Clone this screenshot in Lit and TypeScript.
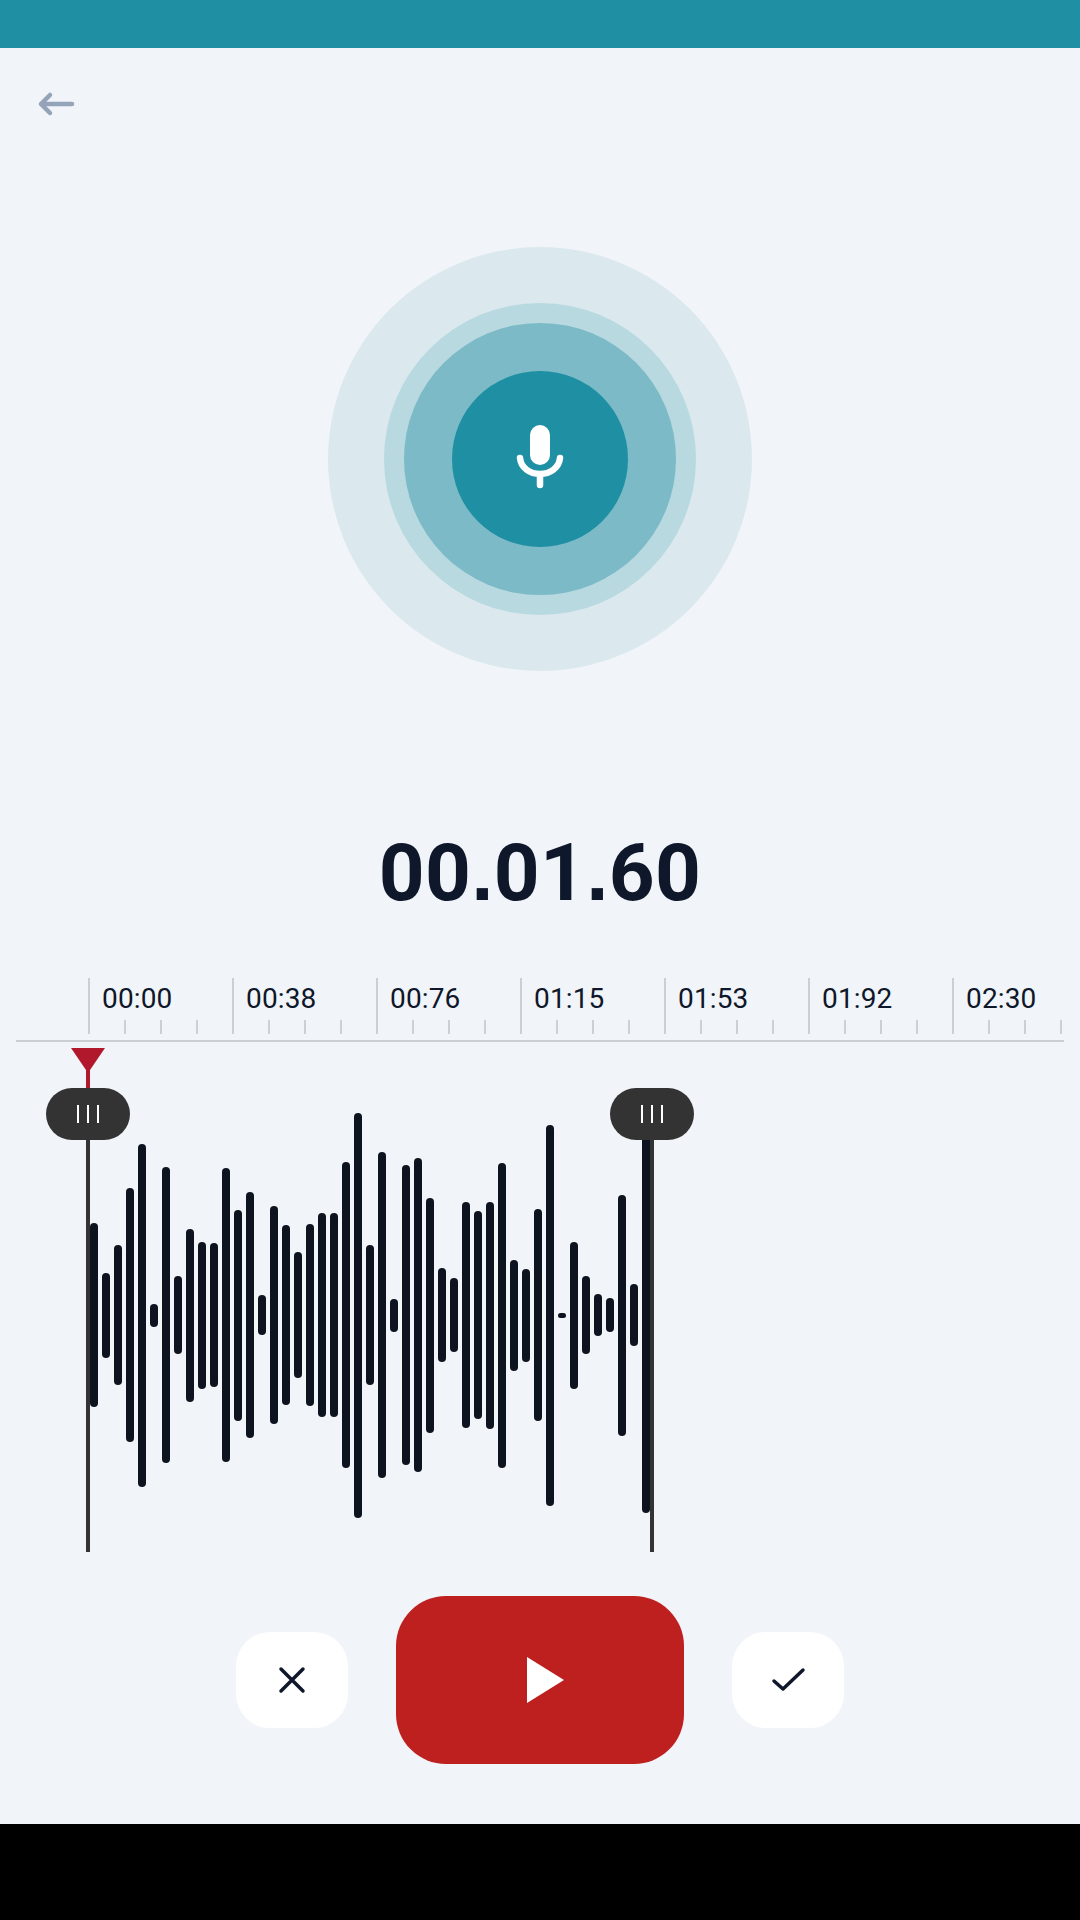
import { LitElement, css, html } from 'lit';
import { customElement } from 'lit/decorators.js';

// bar heights in px, left to right
const BARS = [
  184, 85, 140, 254, 343, 23, 296, 78, 173, 147, 144, 294, 211, 246, 40, 218,
  180, 126, 182, 204, 204, 306, 405, 140, 326, 33, 300, 314, 235, 94, 74, 226,
  208, 227, 305, 111, 93, 212, 381, 5, 147, 78, 42, 34, 241, 62, 395,
];

const LABELS = ['00:00', '00:38', '00:76', '01:15', '01:53', '01:92', '02:30'];

@customElement('app-root')
export class AppRoot extends LitElement {
  static styles = css`
    :host {
      display: flex;
      flex-direction: column;
      height: 1920px;
      background: #f1f5f9;
      color: #0f172a;
      font-family: Roboto, sans-serif;
      overflow: hidden;
    }
    .status {
      height: 48px;
      background: #1f8fa3;
    }
    .header {
      height: 112px;
      box-sizing: border-box;
      padding: 36px 0 0 36px;
    }
    .header svg {
      display: block;
    }
    .rings {
      display: grid;
      place-items: center;
      height: 424px;
      margin-top: 87px;
    }
    .rings > * {
      grid-area: 1 / 1;
      border-radius: 50%;
    }
    .r1 {
      width: 424px;
      height: 424px;
      background: #dbe9ee;
    }
    .r2 {
      width: 312px;
      height: 312px;
      background: #b8d9e0;
    }
    .r3 {
      width: 272px;
      height: 272px;
      background: #7bbac6;
    }
    .r4 {
      width: 176px;
      height: 176px;
      background: #1f8fa3;
      display: flex;
      align-items: center;
      justify-content: center;
    }
    .timer {
      margin-top: 162px;
      font-size: 80px;
      line-height: 80px;
      font-weight: 700;
      letter-spacing: 0.3px;
      text-align: center;
    }
    /* Roboto here has round dots, the reference has square ones */
    .timer b {
      font-family: 'Liberation Sans', sans-serif;
    }
    .ruler {
      display: flex;
      box-sizing: border-box;
      margin: 65px 16px 0;
      padding-left: 72px;
      border-bottom: 2px solid #cbd0d6;
      height: 64px;
      overflow: hidden;
    }
    .seg {
      flex: 0 0 144px;
      box-sizing: border-box;
      height: 56px;
      border-left: 2px solid #cbd0d6;
      display: flex;
      flex-direction: column;
    }
    .seg span {
      margin-top: 7px;
      padding-left: 12px;
      font-size: 28px;
      line-height: 28px;
      letter-spacing: 0.15px;
    }
    .ticks {
      display: flex;
      gap: 34px;
      margin-top: auto;
      padding-left: 34px;
    }
    .ticks i {
      width: 2px;
      height: 14px;
      background: #cbd0d6;
    }
    .wave {
      position: relative;
      height: 504px;
      margin-top: 6px;
      box-sizing: border-box;
      padding: 30px 0 0 90px;
      display: flex;
      align-items: center;
      gap: 4px;
    }
    .bar {
      width: 8px;
      border-radius: 4px;
      background: #0d131f;
    }
    .playhead {
      position: absolute;
      left: 71px;
      top: 0;
      display: block;
    }
    .trim {
      position: absolute;
      top: 40px;
      width: 84px;
      display: flex;
      flex-direction: column;
      align-items: center;
    }
    .trim.start {
      left: 46px;
    }
    .trim.end {
      left: 610px;
    }
    .grip {
      width: 84px;
      height: 52px;
      border-radius: 26px;
      background: #333;
      display: flex;
      align-items: center;
      justify-content: center;
      gap: 8px;
    }
    .grip i {
      width: 2px;
      height: 18px;
      background: #fff;
    }
    .line {
      width: 4px;
      height: 412px;
      background: #333;
    }
    .controls {
      display: flex;
      align-items: center;
      justify-content: center;
      gap: 48px;
      height: 168px;
      margin-top: 44px;
    }
    .btn {
      width: 112px;
      height: 96px;
      border-radius: 34px;
      background: #fff;
      display: flex;
      align-items: center;
      justify-content: center;
    }
    .btn.play {
      width: 288px;
      height: 168px;
      border-radius: 50px;
      background: #be2020;
    }
    .play svg {
      margin-left: 10px;
    }
    .nav {
      flex: 1;
      margin-top: 60px;
      background: #000;
    }
  `;

  private renderTrim(pos: string) {
    return html`
      <div class="trim ${pos}">
        <div class="grip"><i></i><i></i><i></i></div>
        <div class="line"></div>
      </div>
    `;
  }

  render() {
    return html`
      <div class="status"></div>
      <div class="header">
        <svg width="40" height="40" viewBox="0 0 40 40" fill="none" stroke="#94a3b8" stroke-width="4.5" stroke-linecap="round" stroke-linejoin="round">
          <path d="M36 20H5M14 11L5 20L14 29" />
        </svg>
      </div>
      <div class="rings">
        <div class="r1"></div>
        <div class="r2"></div>
        <div class="r3"></div>
        <div class="r4">
          <svg width="48" height="68" viewBox="0 0 48 68" fill="none" stroke="#fff" stroke-width="6.5" stroke-linecap="round">
            <rect x="14" y="0" width="20" height="40" rx="10" fill="#fff" stroke="none" />
            <path d="M4 33C5 43 14 49 24 49C34 49 43 43 44 33M24 49V60" />
          </svg>
        </div>
      </div>
      <div class="timer">00<b>.</b>01<b>.</b>60</div>
      <div class="ruler">
        ${LABELS.map(
          (l) => html`
            <div class="seg">
              <span>${l}</span>
              <div class="ticks"><i></i><i></i><i></i></div>
            </div>
          `
        )}
      </div>
      <div class="wave">
        ${BARS.map((h) => html`<div class="bar" style="height:${h}px"></div>`)}
        ${this.renderTrim('start')} ${this.renderTrim('end')}
        <svg class="playhead" width="34" height="40" viewBox="0 0 34 40" fill="#b2182b">
          <path d="M0 0H34L19 22V40H15V22Z" />
        </svg>
      </div>
      <div class="controls">
        <div class="btn">
          <svg width="32" height="32" viewBox="0 0 32 32" fill="none" stroke="#0f172a" stroke-width="3.5" stroke-linecap="round">
            <path d="M5 5L27 27M27 5L5 27" />
          </svg>
        </div>
        <div class="btn play">
          <svg width="37" height="46" viewBox="0 0 37 46" fill="#fff"><path d="M0 0L37 23L0 46Z" /></svg>
        </div>
        <div class="btn">
          <svg width="36" height="36" viewBox="0 0 36 36" fill="none" stroke="#0f172a" stroke-width="3.5" stroke-linecap="round" stroke-linejoin="round">
            <path d="M4 19L13 27L33 8" />
          </svg>
        </div>
      </div>
      <div class="nav"></div>
    `;
  }
}

declare global {
  interface HTMLElementTagNameMap {
    'app-root': AppRoot;
  }
}
